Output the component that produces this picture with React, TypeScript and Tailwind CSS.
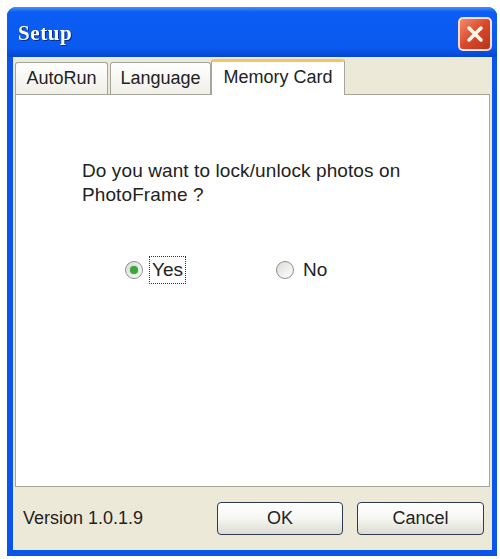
import { X } from "lucide-react";

const sans = { fontFamily: '"Liberation Sans", Arial, sans-serif' };

const Radio = ({ checked, label, focused }: { checked?: boolean; label: string; focused?: boolean }) => (
  <label className="flex items-center gap-[6px] cursor-pointer">
    <span className="flex items-center justify-center w-[18px] h-[18px] rounded-full border border-[#8a8f94] bg-gradient-to-br from-[#dcdcd5] to-white">
      {checked && <span className="w-[8px] h-[8px] rounded-full bg-[#3ca53c] shadow-[0_0_2px_#7fd07f]" />}
    </span>
    <span className={`px-[2px] leading-[26px] text-[19px] ${focused ? "border border-dotted border-[#333]" : "border border-transparent"}`}>
      {label}
    </span>
  </label>
);

const App = () => {
  return (
    <div className="w-[500px] h-[559px] bg-white pt-[7px] pl-[7px]" style={sans}>
      {/* window */}
      <div className="w-[490px] h-[549px] rounded-t-[9px] bg-[#0a56ea] flex flex-col overflow-hidden">
        {/* title bar */}
        <div className="h-[50px] flex items-center justify-between pl-[11px] pr-[5px] pt-[3px] bg-[linear-gradient(#4a90f8_0%,#0b5df3_10%,#0a5af0_82%,#0447cf_100%)]">
          <span
            className="text-white text-[21px] font-bold tracking-[0.6px] drop-shadow-[1px_1px_0_#0a2c8c]"
            style={{ fontFamily: '"Liberation Serif", "Times New Roman", serif' }}
          >
            Setup
          </span>
          <button className="w-[34px] h-[34px] rounded-[5px] border-2 border-white/80 bg-gradient-to-br from-[#f08a6a] via-[#d9482a] to-[#b8351c] flex items-center justify-center">
            <X size={24} strokeWidth={3.5} color="#fff8e8" />
          </button>
        </div>

        {/* body */}
        <div className="flex-1 ml-[6px] mr-[5px] mb-[6px] bg-[#ece9d8] flex flex-col">
          {/* tabs */}
          <div className="h-[37px] flex items-end pl-[2px] text-[18px] text-[#222]">
            <div className="w-[93px] h-[32px] mr-[2px] flex items-center justify-center border border-b-0 border-[#a5a59a] rounded-t-[3px] bg-gradient-to-b from-white to-[#f0efe8]">
              AutoRun
            </div>
            <div className="w-[101px] h-[32px] flex items-center justify-center border border-b-0 border-[#a5a59a] rounded-t-[3px] bg-gradient-to-b from-white to-[#f0efe8]">
              Language
            </div>
            <div className="w-[134px] h-[36px] -mb-px relative z-10 flex items-center justify-center border border-b-0 border-[#a5a59a] border-t-[3px] border-t-[#f6c65a] rounded-t-[3px] bg-white pb-[3px]">
              Memory Card
            </div>
          </div>

          {/* panel */}
          <div className="h-[393px] mx-[2px] bg-white border border-[#a5a59a] pl-[66px] pt-[64px] text-[#222]">
            <p className="text-[19px] leading-[24px] tracking-[0.1px] w-[340px]">
              Do you want to lock/unlock photos on PhotoFrame ?
            </p>
            <div className="flex items-center mt-[49px] pl-[43px] gap-[90px]">
              <Radio checked focused label="Yes" />
              <Radio label="No" />
            </div>
          </div>

          {/* footer */}
          <div className="flex-1 flex items-center pl-[10px] pr-[8px] text-[18px] text-[#222]">
            <span className="flex-1">Version 1.0.1.9</span>
            <button className="w-[126px] h-[33px] rounded-[4px] border border-[#2c3b55] bg-gradient-to-b from-white via-[#f6f6f2] to-[#dcdcd2] mr-[14px]">
              OK
            </button>
            <button className="w-[127px] h-[33px] rounded-[4px] border border-[#2c3b55] bg-gradient-to-b from-white via-[#f6f6f2] to-[#dcdcd2]">
              Cancel
            </button>
          </div>
        </div>
      </div>
    </div>
  );
};

export default App;
